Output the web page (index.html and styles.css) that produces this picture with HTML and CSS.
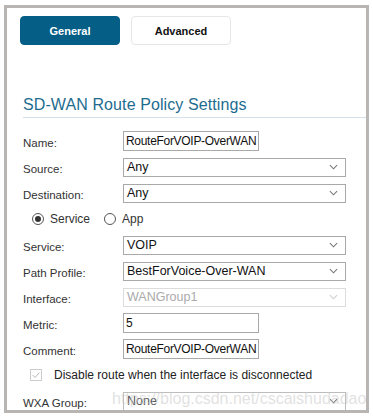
FILE: index.html
```html
<!DOCTYPE html>
<html lang="en">
<head>
    <meta charset="UTF-8">
    <title>SD-WAN Route Policy Settings</title>
    <link rel="stylesheet" href="styles.css">
</head>
<body>
    <div class="frame">
        <div class="tabs">
            <button class="tab active">General</button>
            <button class="tab">Advanced</button>
        </div>

        <div class="section">
            <h2 class="section-title">SD-WAN Route Policy Settings</h2>

            <div class="row">
                <label class="label">Name:</label>
                <div class="input short">RouteForVOIP-OverWAN</div>
            </div>
            <div class="row">
                <label class="label">Source:</label>
                <div class="select"><span>Any</span><svg class="chev" viewBox="0 0 10 6"><path d="M1 1l4 4 4-4"/></svg></div>
            </div>
            <div class="row">
                <label class="label">Destination:</label>
                <div class="select"><span>Any</span><svg class="chev" viewBox="0 0 10 6"><path d="M1 1l4 4 4-4"/></svg></div>
            </div>

            <div class="radios">
                <span class="radio checked"></span><span class="radio-label">Service</span>
                <span class="radio"></span><span class="radio-label">App</span>
            </div>

            <div class="row">
                <label class="label">Service:</label>
                <div class="select"><span>VOIP</span><svg class="chev" viewBox="0 0 10 6"><path d="M1 1l4 4 4-4"/></svg></div>
            </div>
            <div class="row">
                <label class="label">Path Profile:</label>
                <div class="select"><span>BestForVoice-Over-WAN</span><svg class="chev" viewBox="0 0 10 6"><path d="M1 1l4 4 4-4"/></svg></div>
            </div>
            <div class="row">
                <label class="label">Interface:</label>
                <div class="select disabled"><span>WANGroup1</span><svg class="chev" viewBox="0 0 10 6"><path d="M1 1l4 4 4-4"/></svg></div>
            </div>
            <div class="row">
                <label class="label">Metric:</label>
                <div class="input short">5</div>
            </div>
            <div class="row">
                <label class="label">Comment:</label>
                <div class="input short">RouteForVOIP-OverWAN</div>
            </div>

            <div class="check-row">
                <span class="checkbox"><svg viewBox="0 0 12 12"><path d="M2 6l3 3 5-6"/></svg></span>
                <span>Disable route when the interface is disconnected</span>
            </div>

            <div class="row">
                <label class="label">WXA Group:</label>
                <div class="select wxa"><span>None</span><svg class="chev" viewBox="0 0 10 6"><path d="M1 1l4 4 4-4"/></svg></div>
            </div>
        </div>

        <div class="watermark">https://blog.csdn.net/cscaishudadao</div>
    </div>
</body>
</html>
```

FILE: styles.css
```css
body {
    margin: 0;
    background: #fff;
    font-family: "Liberation Sans", Arial, sans-serif;
    color: #333;
}
.frame {
    position: relative;
    margin: 5px 0 0 4px;
    width: 359px;
    height: 402px;
    border: 3px solid #b9b5b3;
    overflow: hidden;
}
.tabs {
    display: flex;
    gap: 11px;
    padding: 8px 0 0 13px;
}
.tab {
    width: 100px;
    height: 29px;
    border-radius: 4px;
    border: 1px solid #e6e6e6;
    background: #fff;
    color: #111;
    font-family: "Liberation Sans", Arial, sans-serif;
    font-size: 11px;
    font-weight: bold;
    padding: 0;
}
.tab.active {
    background: #045e86;
    border-color: #045e86;
    color: #fff;
}
.section {
    padding: 51px 0 0 16px;
}
.section-title {
    margin: 0 0 13px 0;
    padding-bottom: 3px;
    border-bottom: 1px solid #d5e0e8;
    font-weight: normal;
    font-size: 16px;
    letter-spacing: 0.1px;
    color: #1d6c90;
}
.row {
    display: flex;
    align-items: center;
    height: 20px;
    margin-bottom: 6px;
    font-size: 11.5px;
}
.label {
    width: 100px;
    flex: none;
    padding-top: 3px;
}
.input,
.select {
    box-sizing: border-box;
    height: 20px;
    border: 1px solid #a9a9a9;
    font-size: 12.5px;
    color: #111;
    padding: 0 3px;
    display: flex;
    align-items: center;
    white-space: nowrap;
    overflow: hidden;
}
.input.short {
    width: 136px;
    padding: 0 2px;
    font-size: 12px;
    letter-spacing: -0.3px;
}
.select {
    width: 223px;
    justify-content: space-between;
    height: 19px;
}
.chev {
    width: 9px;
    height: 6px;
    margin-right: 4px;
    fill: none;
    stroke: #777;
    stroke-width: 1.2;
}
.select.disabled {
    border-color: #dcdcdc;
    color: #aaa;
}
.select.disabled .chev {
    stroke: #ccc;
}
.select.wxa {
    border-color: #bdbdbd;
    color: #555;
}
.radios {
    display: flex;
    align-items: center;
    height: 20px;
    margin: 0 0 6px 9px;
    font-size: 12px;
}
.radio {
    box-sizing: border-box;
    width: 12px;
    height: 12px;
    border-radius: 50%;
    border: 1px solid #555;
    background: #fff;
    position: relative;
}
.radio.checked::after {
    content: "";
    position: absolute;
    left: 2px;
    top: 2px;
    width: 6px;
    height: 6px;
    border-radius: 50%;
    background: #333;
}
.radio-label {
    margin: 0 14px 0 6px;
}
.check-row {
    display: flex;
    align-items: center;
    height: 20px;
    margin: 4px 0 6px 7px;
    font-size: 12px;
    color: #222;
}
.checkbox {
    box-sizing: border-box;
    width: 12px;
    height: 12px;
    border: 1px solid #ccc;
    margin-right: 12px;
    display: flex;
}
.checkbox svg {
    width: 10px;
    height: 10px;
    fill: none;
    stroke: #bbb;
    stroke-width: 1.2;
}
.watermark {
    position: absolute;
    left: 105px;
    top: 382px;
    font-size: 16px;
    color: rgba(200, 200, 200, 0.55);
    pointer-events: none;
}
```
